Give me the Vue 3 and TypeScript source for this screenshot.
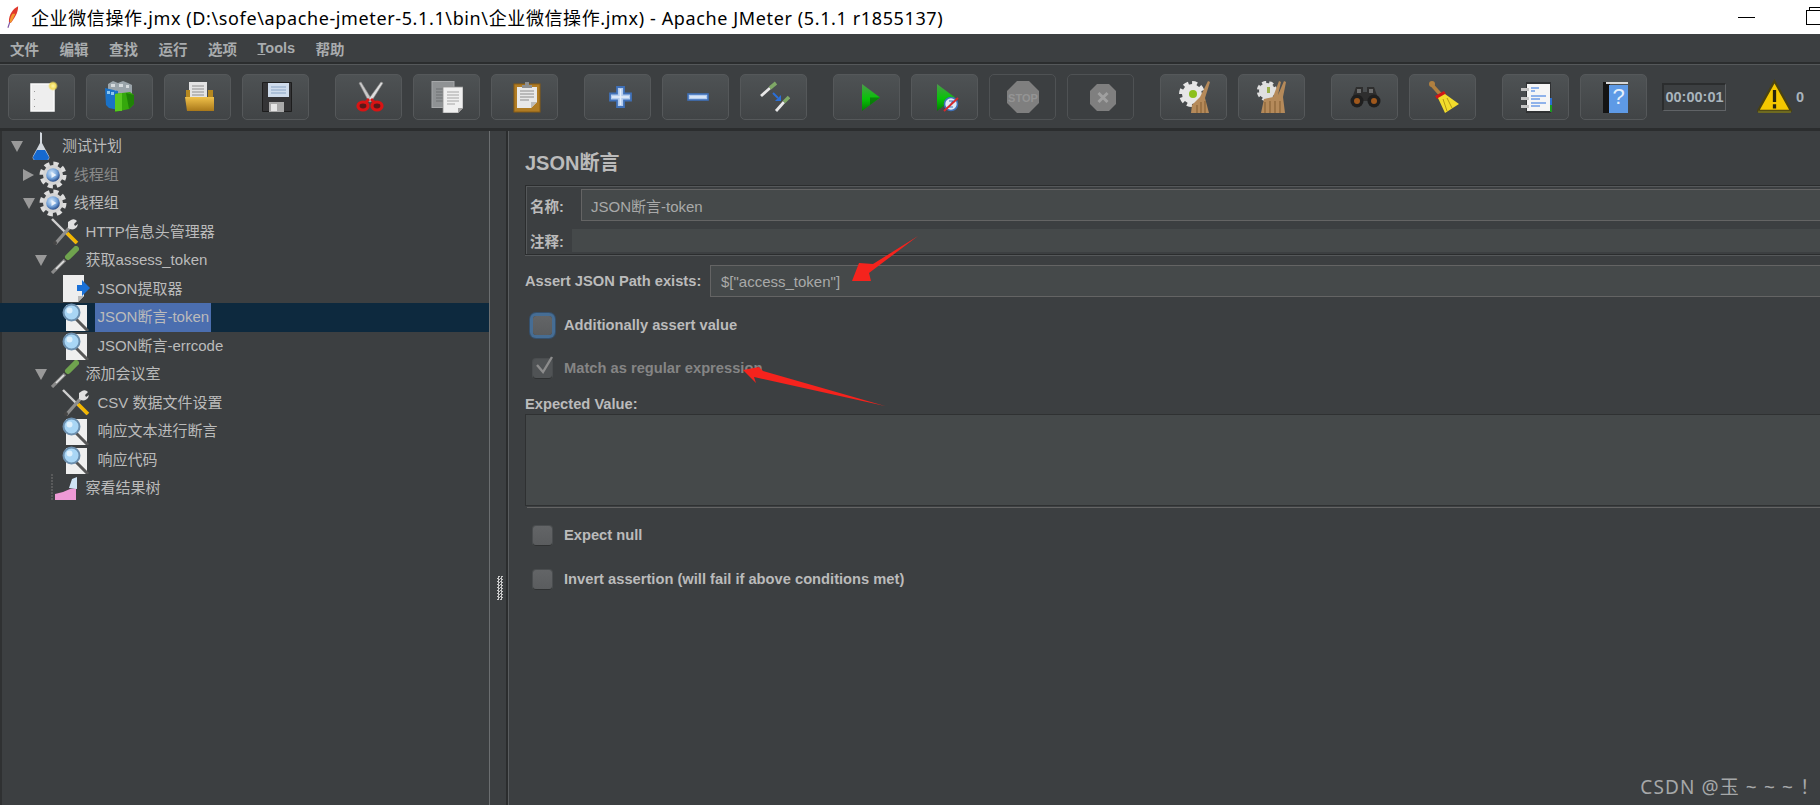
<template>
  <div class="app">
    <svg class="sprite" width="0" height="0">
      <defs>
        <linearGradient id="g-play" x1="0" y1="0" x2="0" y2="1">
          <stop offset="0" stop-color="#4c9a4c" />
          <stop offset="0.55" stop-color="#06c406" />
          <stop offset="1" stop-color="#057a05" />
        </linearGradient>
        <linearGradient id="g-folder" x1="0" y1="0" x2="0" y2="1">
          <stop offset="0" stop-color="#f0c14a" />
          <stop offset="1" stop-color="#a9781a" />
        </linearGradient>
        <radialGradient id="g-orb" cx="0.4" cy="0.35" r="0.7">
          <stop offset="0" stop-color="#cfe6fb" />
          <stop offset="0.6" stop-color="#6f9ed6" />
          <stop offset="1" stop-color="#1d3f7c" />
        </radialGradient>
        <radialGradient id="g-glow">
          <stop offset="0" stop-color="#fff7a8" />
          <stop offset="0.6" stop-color="#f2dc5c" />
          <stop offset="1" stop-color="#f2dc5c" stop-opacity="0" />
        </radialGradient>
      </defs>

      <!-- toolbar icons -->
      <symbol id="i-new" viewBox="0 0 32 32">
        <rect x="5" y="3" width="23" height="27" fill="#eeeeee" stroke="#fafafa" stroke-width="1.5" />
        <path d="M8 10h1v1H8zM8 18h1v1H8zM8 25h1v1H8z" fill="#9a9a9a" />
        <circle cx="27" cy="5" r="5" fill="url(#g-glow)" />
      </symbol>
      <symbol id="i-templates" viewBox="0 0 32 32">
        <path d="M4 3l5-3 5 2 5-2 5 2 4 2v10H4z" fill="#9aa4aa" />
        <path d="M7 3h4v3H7zM15 3h4v3h-4zM22 4h3v3h-3zM9 9h3v3H9z" fill="#d5dadd" />
        <path d="M1 7l13 3v19l-9-2-3-3z" fill="#1a72c8" />
        <path d="M3 10h3v3H3zM7 11h3v3H7z" fill="#8cc6f0" />
        <path d="M11 13l7-1 8-1 4 3 0 9-5 5-14 3z" fill="#35a80c" />
        <path d="M11 13l7-1v18l-7 0z" fill="#58c820" />
        <path d="M22 12l8 2v9l-5 5z" fill="#1f8206" />
      </symbol>
      <symbol id="i-open" viewBox="0 0 32 32">
        <rect x="7" y="1" width="18" height="17" fill="#e4e4e4" />
        <path d="M10 5h12M10 8h12M10 11h12M10 14h12" stroke="#8e8e8e" stroke-width="1.2" />
        <path d="M4 9h4v8h18V9h5v9H4z" fill="#b58820" />
        <path d="M3 16h29v14H5z" fill="url(#g-folder)" />
      </symbol>
      <symbol id="i-save" viewBox="0 0 32 32">
        <path d="M2.500 1.500h29v29h-29z" fill="#343436" stroke="#1d1d1d" />
        <rect x="8" y="2" width="21" height="14" fill="#cfdcec" />
        <path d="M11 6h15M11 9h15M11 12h15" stroke="#8aa3c4" stroke-width="1.1" />
        <rect x="9" y="21" width="15" height="10" fill="#a9a9a9" />
        <rect x="11" y="23" width="6" height="7" fill="#e6e6e6" />
      </symbol>
      <symbol id="i-cut" viewBox="0 0 32 32">
        <path d="M8 1l11 18-3 2L6 2z" fill="#c9c9c9" stroke="#8a8a8a" stroke-width=".6" />
        <path d="M28 1L15 19l3 2L30 2z" fill="#dedede" stroke="#8a8a8a" stroke-width=".6" />
        <ellipse cx="10" cy="25" rx="5" ry="4" fill="#5a1818" stroke="#d81414" stroke-width="3.2" />
        <ellipse cx="24" cy="25" rx="5" ry="4" fill="#5a1818" stroke="#d81414" stroke-width="3.2" />
        <path d="M13 21l3-3M21 21l-3-3" stroke="#d81414" stroke-width="3" />
      </symbol>
      <symbol id="i-copy" viewBox="0 0 32 32">
        <rect x="1" y="0.5" width="22" height="26" fill="#8f9294" stroke="#a6a8aa" />
        <path d="M5 8h9M5 11h9M5 14h9M5 17h9M5 20h7" stroke="#6e7173" stroke-width="1.1" />
        <path d="M12 6h20v21l-5 5H12z" fill="#efefef" stroke="#909090" stroke-width=".8" />
        <path d="M16 11h12M16 14h12M16 17h12M16 20h12M16 23h8" stroke="#a5a5a5" stroke-width="1.1" />
        <path d="M27 32v-5h5z" fill="#a0a0a0" />
      </symbol>
      <symbol id="i-paste" viewBox="0 0 32 32">
        <rect x="5" y="3" width="26" height="28" fill="#b07c24" stroke="#8a5c12" />
        <path d="M8 6h20v15l-6 6H8z" fill="#e8e8e8" />
        <path d="M11 10h14M11 13h14M11 16h14M11 19h9" stroke="#8c8c8c" stroke-width="1.2" />
        <path d="M22 27v-6h6z" fill="#bbbbbb" />
        <path d="M13 4h3V1h4v3h3v3H13z" fill="#8d8f90" />
      </symbol>
      <symbol id="i-plus" viewBox="0 0 32 32">
        <path d="M15 6h7v6.5h7v7h-7V26h-7v-6.5H8v-7h7z" fill="#b4cdef" stroke="#3f70b8" stroke-width="1.8" />
        <path d="M18.5 8v16M10 16h17" stroke="#e6eefa" stroke-width="1.5" />
      </symbol>
      <symbol id="i-minus" viewBox="0 0 32 32">
        <rect x="8" y="13" width="20" height="6" fill="#b4cdef" stroke="#3f70b8" stroke-width="1.6" />
        <path d="M10 16h16" stroke="#e6eefa" stroke-width="1.4" />
      </symbol>
      <symbol id="i-toggle" viewBox="0 0 32 32">
        <path d="M3 15l9-8" stroke="#e8e8e8" stroke-width="2.8" />
        <path d="M12 7l6-5" stroke="#7fa866" stroke-width="3.6" />
        <path d="M18 30l8-9" stroke="#e8e8e8" stroke-width="2.8" />
        <path d="M26 21l5-5" stroke="#7fa866" stroke-width="3.6" />
        <path d="M15 12l5 5" stroke="#2a6fd8" stroke-width="2" />
        <path d="M23 14v6h-6z" fill="#2a6fd8" />
      </symbol>
      <symbol id="i-play" viewBox="0 0 32 32">
        <path d="M11 3l18 13.5L11 30z" fill="url(#g-play)" />
        <path d="M19 16.500h10L19 24z" fill="#0a6a0a" opacity=".7" />
      </symbol>
      <symbol id="i-play-no" viewBox="0 0 32 32">
        <path d="M8 3l18 13.500L8 30z" fill="url(#g-play)" />
        <circle cx="22" cy="23" r="6.500" fill="#dfe9f5" stroke="#3f70b8" stroke-width="1.600" />
        <path d="M20 20h4l-4 6h4" fill="none" stroke="#3f70b8" stroke-width="1.200" />
        <path d="M15 30L29 17" stroke="#d8282a" stroke-width="1.800" />
      </symbol>
      <symbol id="i-stop" viewBox="0 0 32 32">
        <path d="M10 0h12l10 10v12L22 32H10L0 22V10z" fill="#7f7f7f" />
      </symbol>
      <symbol id="i-shutdown" viewBox="0 0 32 32">
        <path d="M12 3h12l7 7v13l-7 7H12l-7-7V10z" fill="#7f7f7f" />
        <path d="M13.500 12l9 9M22.500 12l-9 9" stroke="#a0a0a0" stroke-width="3" />
      </symbol>
      <symbol id="i-clear" viewBox="0 0 32 32">
        <circle cx="14" cy="13" r="11" fill="none" stroke="#e6e6e6" stroke-width="4" stroke-dasharray="5 3.600" />
        <circle cx="14" cy="13" r="10" fill="#e6e6e6" />
        <circle cx="15" cy="13" r="4" fill="#8cc01c" />
        <path d="M30 0l2 1-5 16 4 15H13l1-8 8-8z" fill="#b58a5a" />
        <path d="M19 24v8M23 21v11M27 20v12" stroke="#8a6438" stroke-width="1.200" />
      </symbol>
      <symbol id="i-clear-all" viewBox="0 0 32 32">
        <circle cx="11" cy="10" r="8.500" fill="none" stroke="#e0e0e0" stroke-width="3.400" stroke-dasharray="4 3" />
        <circle cx="11" cy="10" r="8" fill="#e0e0e0" />
        <path d="M11 6h3v6h-3z" fill="#9bb04a" />
        <path d="M5 32l3-14 9-2 6-16 2 1-3 13 6-14 2 1-3 15 2 16z" fill="#b58a5a" />
        <path d="M9 21v11M14 20v12M19 20v12M24 20v12" stroke="#8a6438" stroke-width="1.200" />
      </symbol>
      <symbol id="i-search" viewBox="0 0 32 32">
        <path d="M7 6h7v5h4V6h7l5 14H2z" fill="#2e2e2e" />
        <path d="M8 8h4v4H8zM20 8h4v4h-4z" fill="#6c6c6c" />
        <circle cx="8" cy="20" r="6.500" fill="#1f1f1f" />
        <circle cx="25" cy="20" r="6.500" fill="#1f1f1f" />
        <circle cx="8" cy="20" r="3" fill="#a0581c" />
        <circle cx="25" cy="20" r="3" fill="#a0581c" />
      </symbol>
      <symbol id="i-broom" viewBox="0 0 32 32">
        <circle cx="5" cy="3" r="3" fill="#b08040" />
        <path d="M5 4l8 9" stroke="#b08040" stroke-width="3.600" />
        <path d="M8 15l9-5 2 3-9 5z" fill="#d01616" />
        <path d="M11 17l7-4 14 10-14 9z" fill="#f2dc2c" />
        <path d="M16 18l4 12M20 17l5 10" stroke="#b69a12" stroke-width="1" />
      </symbol>
      <symbol id="i-log" viewBox="0 0 32 32">
        <rect x="6" y="1" width="25" height="31" fill="#2f3133" />
        <rect x="7" y="3" width="23" height="27" fill="#f5f5f5" />
        <rect x="30" y="17" width="3" height="7" fill="#2b6fd0" />
        <rect x="30" y="24" width="3" height="7" fill="#1a9a20" />
        <path d="M11 7h8M11 10h4M11 15h15M11 18h9M11 22h15M11 25h9" stroke="#2a70e0" stroke-width="1.200" />
        <path d="M1 7h8v3H1zM1 16h8v3H1zM1 24h8v3H1z" fill="#c5c5c5" />
      </symbol>
      <symbol id="i-help" viewBox="0 0 32 32">
        <rect x="5" y="1" width="7" height="31" fill="#141414" />
        <rect x="8" y="1" width="22" height="2" fill="#d8d8d8" />
        <rect x="11" y="4" width="19" height="28" fill="#5e9ae6" />
      </symbol>
      <symbol id="i-warn" viewBox="0 0 32 32">
        <path d="M16 2l15 27H1z" fill="#f4c800" stroke="#4a4210" stroke-width="2" />
        <path d="M1 30h30" stroke="#6e6a20" stroke-width="2" />
        <path d="M16 10v11M16 23v4" stroke="#26240e" stroke-width="3" />
      </symbol>

      <!-- tree icons -->
      <symbol id="t-plan" viewBox="0 0 28 28">
        <path d="M13 0l2 1v10l7 13c1 2 0 4-2 4H8c-2 0-3-2-2-4l7-13z" fill="#d3d8de" />
        <path d="M10 18h8l4 7c0 2-1 3-2 3H8c-1 0-2-1-2-3z" fill="#1569d0" />
      </symbol>
      <symbol id="t-gear" viewBox="0 0 28 28">
        <circle cx="14" cy="14" r="11.200" fill="none" stroke="#dddddd" stroke-width="4.600" stroke-dasharray="5 3.800" />
        <circle cx="14" cy="14" r="10" fill="#d4d4d4" />
        <circle cx="14" cy="14" r="6.800" fill="url(#g-orb)" />
        <path d="M12.500 11l5 3-5 3z" fill="#eaf2fb" />
      </symbol>
      <symbol id="t-tools" viewBox="0 0 28 28">
        <path d="M1 1l24 24" stroke="#d0d0d0" stroke-width="2.400" />
        <path d="M16 15l10 10" stroke="#f3b700" stroke-width="3.600" />
        <path d="M4 26l15-17" stroke="#8d8d8d" stroke-width="3.400" />
        <path d="M20 2a5 5 0 0 1 6 1l-3 3 1 2 3-2a6 6 0 0 1-8 5l-2-1 0-6z" fill="#e0e0e0" />
        <circle cx="4" cy="25" r="2" fill="#444" />
      </symbol>
      <symbol id="t-sampler" viewBox="0 0 28 28">
        <path d="M1 27l14-14" stroke="#8a8a8a" stroke-width="3.200" />
        <path d="M5 23l8-8" stroke="#e2e2e2" stroke-width="1.600" />
        <path d="M14 14l4-4" stroke="#3d3d3d" stroke-width="5" />
        <path d="M17 11l8-8" stroke="#6fa34e" stroke-width="6" stroke-linecap="round" />
      </symbol>
      <symbol id="t-extract" viewBox="0 0 28 28">
        <path d="M1 0h21v21l-6 6H1z" fill="#eeeeee" />
        <path d="M16 27v-6h6z" fill="#b9b9b9" />
        <path d="M15 10h5V5l8 8-8 8v-5h-5z" fill="#1a70d6" />
      </symbol>
      <symbol id="t-assert" viewBox="0 0 28 28">
        <rect x="4" y="2" width="21" height="26" fill="#efefef" />
        <path d="M13 15l13 13" stroke="#565656" stroke-width="3" />
        <circle cx="9.500" cy="9.500" r="8" fill="#a9d6f5" stroke="#6c8fae" stroke-width="2" />
        <circle cx="7.500" cy="7.500" r="3" fill="#dff1fd" />
      </symbol>
      <symbol id="t-listener" viewBox="0 0 28 28">
        <path d="M1 0v26" stroke="#777" stroke-width="1" stroke-dasharray="2 1" />
        <path d="M4 26h21V14l-6 1-7 3-8 2z" fill="#ee9ad6" />
        <path d="M18 14l3-9 5-2v12z" fill="#cfe4f6" />
      </symbol>
    </svg>

    <header class="titlebar">
      <svg class="feather" viewBox="0 0 14 24">
        <path d="M12 0C6 3 2 9 2 17l2 1C8 13 12 7 12 0z" fill="#e0382c" />
        <path d="M6 8c-2 3-3 6-3 9l1 1c2-3 3-6 5-10z" fill="#f29a2e" />
        <path d="M3 17L1 23" stroke="#7a4fa0" stroke-width="1.200" />
      </svg>
      <span class="title-text">企业微信操作.jmx (D:\sofe\apache-jmeter-5.1.1\bin\企业微信操作.jmx) - Apache JMeter (5.1.1 r1855137)</span>
      <span class="win-min"></span>
      <span class="win-restore"></span>
    </header>

    <nav class="menubar">
      <span v-for="m in menus" :key="m" class="menu-item">
        <template v-if="m === 'Tools'"><u>T</u>ools</template>
        <template v-else>{{ m }}</template>
      </span>
    </nav>

    <div class="toolbar">
      <div v-for="(group, gi) in toolbar" :key="gi" class="tool-group">
        <button v-for="b in group" :key="b.icon" class="tool-btn" :class="{ off: b.off }">
          <svg class="tool-icon">
            <use :href="'#' + b.icon" />
            <text v-if="b.icon === 'i-stop'" x="16" y="21" text-anchor="middle" class="stop-text">STOP</text>
            <text v-if="b.icon === 'i-help'" x="20.500" y="23" text-anchor="middle" class="help-text">?</text>
          </svg>
        </button>
      </div>
      <div class="timer">00:00:01</div>
      <svg class="warn"><use href="#i-warn" /></svg>
      <span class="warn-count">0</span>
    </div>

    <main class="main">
      <aside class="tree">
        <div v-for="row in rows" :key="row.id" class="tree-row" :class="{ selected: row.selected }" :style="{ paddingLeft: 7 + row.level * 11.8 + 'px' }">
          <span class="arrow-slot">
            <span v-if="row.arrow" class="arrow" :class="row.arrow"></span>
          </span>
          <svg class="tree-icon"><use :href="'#' + row.icon" /></svg>
          <span class="tree-label" :class="{ dim: row.dim }">{{ row.label }}</span>
        </div>
      </aside>

      <div class="divider"><div class="grip"></div></div>

      <section class="editor">
        <h1 class="heading">JSON断言</h1>

        <div class="name-panel">
          <div class="name-row">
            <label class="small-label">名称:</label>
            <div class="field name-field">JSON断言-token</div>
          </div>
          <div class="comment-row">
            <label class="small-label">注释:</label>
            <div class="comment-field"></div>
          </div>
        </div>

        <div class="path-row">
          <label class="bold-label">Assert JSON Path exists:</label>
          <div class="field path-field">$["access_token"]</div>
        </div>

        <div class="check-row first">
          <span class="check focus"></span>
          <span class="bold-label">Additionally assert value</span>
        </div>
        <div class="check-row second disabled">
          <span class="check">
            <svg viewBox="0 0 20 20" class="tick"><path d="M3 9l6 7L18 1" fill="none" stroke="#8c8c8c" stroke-width="2.400" /></svg>
          </span>
          <span class="bold-label">Match as regular expression</span>
        </div>

        <label class="bold-label expected-label">Expected Value:</label>
        <div class="expected-box"></div>
        <div class="expected-rule"></div>

        <div class="check-row third">
          <span class="check"></span>
          <span class="bold-label">Expect null</span>
        </div>
        <div class="check-row fourth">
          <span class="check"></span>
          <span class="bold-label">Invert assertion (will fail if above conditions met)</span>
        </div>
      </section>
    </main>

    <!-- red annotation arrows drawn over the screenshot -->
    <svg class="annotations" width="1820" height="805">
      <path d="M918 236L873 264 859 263 852 281 871 281 869 273z" fill="#f5231d" />
      <path d="M743 370L759 367 763 371 885 406 754 377 756 383z" fill="#f5231d" />
    </svg>
    <div class="watermark">CSDN @玉 ~ ~ ~ ！</div>
  </div>
</template>

<script setup lang="ts">
interface ToolButton {
  icon: string;
  off?: boolean;
}

interface TreeRow {
  id: number;
  label: string;
  icon: string;
  level: number;
  arrow?: 'down' | 'right';
  dim?: boolean;
  selected?: boolean;
}

const menus = ['文件', '编辑', '查找', '运行', '选项', 'Tools', '帮助'];

const toolbar: ToolButton[][] = [
  [{ icon: 'i-new' }, { icon: 'i-templates' }, { icon: 'i-open' }, { icon: 'i-save' }],
  [{ icon: 'i-cut' }, { icon: 'i-copy' }, { icon: 'i-paste' }],
  [{ icon: 'i-plus' }, { icon: 'i-minus' }, { icon: 'i-toggle' }],
  [{ icon: 'i-play' }, { icon: 'i-play-no' }, { icon: 'i-stop', off: true }, { icon: 'i-shutdown', off: true }],
  [{ icon: 'i-clear' }, { icon: 'i-clear-all' }],
  [{ icon: 'i-search' }, { icon: 'i-broom' }],
  [{ icon: 'i-log' }, { icon: 'i-help' }]
];

const rows: TreeRow[] = [
  { id: 1, label: '测试计划', icon: 't-plan', level: 0, arrow: 'down' },
  { id: 2, label: '线程组', icon: 't-gear', level: 1, arrow: 'right', dim: true },
  { id: 3, label: '线程组', icon: 't-gear', level: 1, arrow: 'down' },
  { id: 4, label: 'HTTP信息头管理器', icon: 't-tools', level: 2 },
  { id: 5, label: '获取assess_token', icon: 't-sampler', level: 2, arrow: 'down' },
  { id: 6, label: 'JSON提取器', icon: 't-extract', level: 3 },
  { id: 7, label: 'JSON断言-token', icon: 't-assert', level: 3, selected: true },
  { id: 8, label: 'JSON断言-errcode', icon: 't-assert', level: 3 },
  { id: 9, label: '添加会议室', icon: 't-sampler', level: 2, arrow: 'down' },
  { id: 10, label: 'CSV 数据文件设置', icon: 't-tools', level: 3 },
  { id: 11, label: '响应文本进行断言', icon: 't-assert', level: 3 },
  { id: 12, label: '响应代码', icon: 't-assert', level: 3 },
  { id: 13, label: '察看结果树', icon: 't-listener', level: 2 }
];
</script>

<style>
html,
body {
  margin: 0;
  background: #3c3f41;
}
</style>

<style scoped>
.app {
  position: relative;
  width: 1820px;
  height: 805px;
  overflow: hidden;
  display: flex;
  flex-direction: column;
  background: #3c3f41;
  color: #bbbbbb;
  font-family: "Liberation Sans", "Noto Sans CJK SC", sans-serif;
}

.sprite {
  flex: none;
}

.stop-text {
  font-family: "Liberation Sans", sans-serif;
  font-size: 11px;
  font-weight: 700;
  fill: #949494;
}

.help-text {
  font-family: "Liberation Sans", sans-serif;
  font-size: 22px;
  fill: #e6f0fb;
}

/* title bar */
.titlebar {
  flex: none;
  height: 34px;
  background: #ffffff;
  display: flex;
  align-items: center;
  padding-left: 7px;
  color: #000000;
  font-family: "Noto Sans", "Noto Sans CJK SC", sans-serif;
  font-size: 18px;
  letter-spacing: 0.62px;
}

.feather {
  width: 13px;
  height: 23px;
  margin-right: 11px;
}

.title-text {
  white-space: nowrap;
}

.win-min {
  width: 17px;
  height: 1px;
  background: #000000;
  margin-left: auto;
}

.win-restore {
  width: 15px;
  height: 15px;
  margin-left: 51px;
  margin-right: -1px;
  border: 1px solid #000000;
  box-sizing: border-box;
  box-shadow: 3px -3px 0 -1px #ffffff, 3px -3px 0 0 #000000;
}

/* menu */
.menubar {
  flex: none;
  height: 28px;
  display: flex;
  align-items: center;
  gap: 20.500px;
  padding-left: 10px;
  font-size: 14.500px;
  font-weight: 700;
  color: #a9acae;
}

.menu-item {
  white-space: nowrap;
}

/* toolbar */
.toolbar {
  flex: none;
  height: 69px;
  box-sizing: border-box;
  display: flex;
  align-items: center;
  padding: 1px 0 0 8px;
  gap: 26px;
  border-top: 2px solid #2b2d2e;
  border-bottom: 3px solid #2b2d2e;
  box-shadow: inset 0 1px 0 #55585a;
}

.tool-group {
  display: flex;
  gap: 11px;
}

.tool-btn {
  width: 67px;
  height: 46px;
  box-sizing: border-box;
  padding: 0;
  display: flex;
  align-items: center;
  justify-content: center;
  border: 1px solid #55585a;
  border-radius: 5px;
  background: linear-gradient(#4e5254, #414446);
}

.tool-btn.off {
  background: #3c3f41;
  border-color: #4f5254;
}

.tool-icon {
  width: 32px;
  height: 32px;
  overflow: visible;
}

.timer {
  width: 64px;
  height: 28px;
  box-sizing: border-box;
  margin-left: -11px;
  display: flex;
  align-items: center;
  justify-content: center;
  border: 1px solid #606366;
  border-top: 2px solid #2b2d2e;
  border-left: 2px solid #2b2d2e;
  font-size: 14.500px;
  font-weight: 700;
  color: #a9b4bd;
}

.warn {
  width: 35px;
  height: 35px;
  margin-left: 5px;
}

.warn-count {
  margin-left: -22px;
  font-size: 14.500px;
  font-weight: 700;
  color: #a9b4bd;
}

/* main split */
.main {
  flex: 1;
  min-height: 0;
  display: flex;
}

.tree {
  width: 489px;
  flex: none;
  box-sizing: border-box;
  padding-top: 1px;
  border-left: 2px solid #2f3132;
}

.tree-row {
  display: flex;
  align-items: center;
  height: 28.500px;
  margin-left: -2px;
  font-size: 15px;
  white-space: nowrap;
}

.tree-row.selected {
  background: #0d293e;
}

.arrow-slot {
  width: 20px;
  flex: none;
  display: flex;
  justify-content: center;
}

.arrow {
  display: block;
  width: 0;
  height: 0;
}

.arrow.down {
  border-left: 6px solid transparent;
  border-right: 6px solid transparent;
  border-top: 11px solid #999999;
}

.arrow.right {
  border-top: 6px solid transparent;
  border-bottom: 6px solid transparent;
  border-left: 11px solid #999999;
}

.tree-icon {
  width: 28px;
  height: 28px;
  flex: none;
  margin-right: 7px;
}

.tree-label {
  line-height: 28.500px;
}

.tree-label.dim {
  color: #8a8a8a;
}

.selected .tree-label {
  background: #4b6eaf;
  margin-left: -2px;
  padding: 0 2px;
}

.divider {
  width: 19px;
  flex: none;
  box-sizing: border-box;
  padding: 445px 0 0 7px;
  border-left: 1px solid #6b6e70;
  border-right: 2px solid #2b2d2e;
}

.grip {
  width: 6px;
  height: 24px;
  background: repeating-conic-gradient(#c9c9c9 0 25%, #3c3f41 0 50%) 0 0 / 3px 3px;
}

/* editor */
.editor {
  flex: 1;
  min-width: 0;
  padding-left: 16px;
  display: flex;
  flex-direction: column;
  align-items: stretch;
  border-left: 1px solid #5a5d5f;
}

.heading {
  margin: 19px 0 9px;
  font-size: 20px;
  line-height: 26px;
  font-weight: 700;
}

.small-label {
  font-size: 14.500px;
  font-weight: 700;
  white-space: nowrap;
}

.bold-label {
  font-size: 14.700px;
  font-weight: 700;
  white-space: nowrap;
}

.name-panel {
  height: 70px;
  box-sizing: border-box;
  padding: 3px 0 1px 4px;
  display: flex;
  flex-direction: column;
  gap: 8px;
  border: 1px solid #2b2d2e;
  border-right: 0;
  box-shadow: inset 1px 1px 0 #55585a, 0 1px 0 #55585a;
}

.name-row,
.comment-row {
  display: flex;
  align-items: center;
}

.name-row .small-label {
  width: 51px;
}

.comment-row .small-label {
  width: 42px;
}

.field {
  flex: 1;
  box-sizing: border-box;
  display: flex;
  align-items: center;
  background: #45494a;
  border: 1px solid #646464;
  border-right: 0;
  font-size: 15px;
  color: #a9a9a9;
}

.name-field {
  height: 32px;
  padding-left: 9px;
}

.comment-field {
  flex: 1;
  height: 23px;
  background: #45494a;
}

.path-row {
  display: flex;
  align-items: center;
  margin-top: 10px;
}

.path-row .bold-label {
  width: 185px;
}

.path-field {
  height: 32px;
  padding-left: 10px;
}

.check-row {
  display: flex;
  align-items: center;
  height: 24px;
}

.check-row.first {
  margin-top: 16px;
}

.check-row.second {
  margin-top: 19px;
}

.check-row.third {
  margin-top: 15px;
}

.check-row.fourth {
  margin-top: 20px;
}

.check {
  width: 19px;
  height: 19px;
  box-sizing: border-box;
  margin: 0 12px 0 8px;
  position: relative;
  border-radius: 3px;
  background: linear-gradient(#636567, #5a5c5e);
  box-shadow: 0 1px 0 #2f3132, 0 0 0 1px #4a4d4f;
}

.check.focus {
  box-shadow: 0 0 0 3px #466d94, 0 0 0 4px #35506c;
}

.disabled .bold-label {
  color: #858585;
}

.disabled .check {
  background: #505355;
}

.tick {
  position: absolute;
  left: 1px;
  top: -3px;
  width: 20px;
  height: 20px;
}

.expected-label {
  margin-top: 15px;
  line-height: 18px;
}

.expected-box {
  height: 92px;
  margin-top: 1px;
  background: #45494a;
  border: 1px solid #2f3132;
  border-right: 0;
  box-sizing: border-box;
}

.expected-rule {
  height: 1px;
  margin: 1px 0 0 2px;
  background: #646464;
}

/* overlays */
.annotations {
  position: absolute;
  left: 0;
  top: 0;
  pointer-events: none;
}

.watermark {
  position: absolute;
  right: 0;
  bottom: 5px;
  font-family: "Noto Sans", "Noto Sans CJK SC", sans-serif;
  font-size: 19px;
  letter-spacing: 1.1px;
  color: #a6a8a9;
  white-space: nowrap;
}
</style>
